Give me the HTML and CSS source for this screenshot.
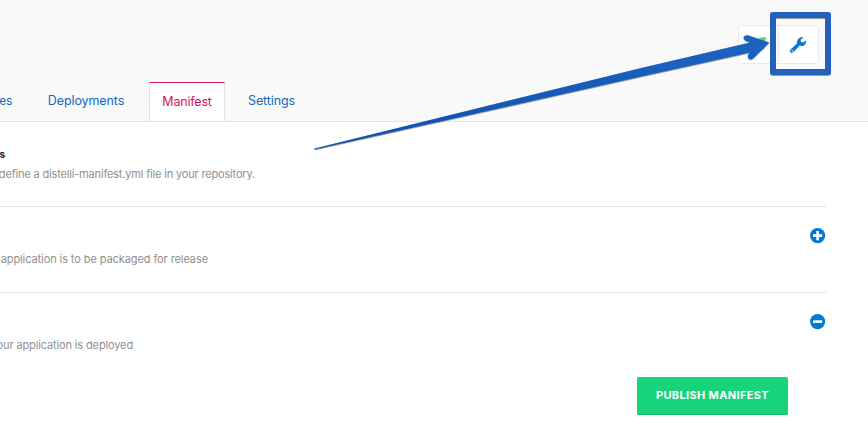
FILE: index.html
```html
<!DOCTYPE html>
<html lang="en">
<head>
<meta charset="utf-8">
<title>Manifest</title>
<link rel="stylesheet" href="styles.css">
</head>
<body>
<header class="header">
  <div class="actions">
    <button class="action" aria-label="Deploy"><svg width="16" height="16" viewBox="0 0 16 16"><path d="M0 7 7 1.5Q10 0 15 0L13 13 8 10Z" fill="#55db7c"/></svg></button>
    <button class="action" aria-label="Tools"><svg class="wrench" width="18" height="18" viewBox="0 0 18 18"><path fill="#0579d2" fill-rule="evenodd" d="M14.4 1.2 11.6 3.9 12.1 6.1 14.1 6.4 17 4.5C17.5 7.7 15.4 10.1 12.4 10.1 11.8 10.1 11.2 9.9 10.7 9.6L4.5 16.1C3.6 17.1 2.3 17.2 1.4 16.3.6 15.4.7 14.3 1.5 13.4L8.2 7.2C7.4 3.6 11 .1 14.4 1.2ZM3.1 14a.8.8 0 1 0 .1 1.6.8.8 0 0 0-.1-1.6Z"/></svg></button>
  </div>
  <nav class="tabs">
    <a class="tab tab-first">es</a>
    <a class="tab tab-deploy">Deployments</a>
    <a class="tab active">Manifest</a>
    <a class="tab tab-settings">Settings</a>
  </nav>
</header>
<main class="content">
  <section class="row intro">
    <div class="copy w-intro"><h2>s</h2><p>define a distelli-manifest.yml file in your repository.</p></div>
  </section>
  <section class="row">
    <div class="copy w-package"><p>application is to be packaged for release</p></div>
    <svg class="toggle" width="16" height="16" viewBox="0 0 16 16"><circle cx="7.6" cy="7.6" r="7.6" fill="#0579d2"/><path d="M3 7.6h9.2M7.6 3v9.2" stroke="#fff" stroke-width="2.6"/></svg>
  </section>
  <section class="row last">
    <div class="copy w-deploy"><p>our application is deployed</p></div>
    <svg class="toggle" width="16" height="16" viewBox="0 0 16 16"><circle cx="7.6" cy="7.6" r="7.6" fill="#0579d2"/><path d="M3 7.6h9.2" stroke="#fff" stroke-width="2.6"/></svg>
  </section>
  <button class="publish">PUBLISH MANIFEST</button>
</main>
<svg class="annotation" width="868" height="447" viewBox="0 0 868 447">
  <defs>
    <linearGradient id="ink" x1="0" y1="0" x2=".15" y2="1"><stop offset="0" stop-color="#2368c5"/><stop offset="1" stop-color="#0b50b0"/></linearGradient>
    <filter id="shade" x="-5%" y="-10%" width="110%" height="120%"><feDropShadow dx="0" dy=".7" stdDeviation=".4" flood-color="#222" flood-opacity=".6"/></filter>
  </defs>
  <rect x="773" y="15" width="55" height="57" fill="none" stroke="#2162be" stroke-width="6" stroke-linejoin="round" filter="url(#shade)"/>
  <path filter="url(#shade)" fill="url(#ink)" d="M314.5 148.4 640 68.2 750 42.4 745.5 40.6Q743 39 743.7 37 744.8 34.6 748 35.3L769.3 42.4 753.8 57.8Q751 60.5 748.6 58.6 747 56.9 748.5 54L750 52.6 640 76.8 314.5 149.6Z"/>
</svg>
</body>
</html>
```
FILE: styles.css
```css
* { box-sizing: border-box; }
body {
  margin: 0;
  height: 447px;
  overflow: hidden;
  position: relative;
  background: #fff;
  font-family: Inter, "Liberation Sans", sans-serif;
}
button { font: inherit; margin: 0; padding: 0; }
.header {
  height: 122px;
  padding-top: 25px;
  background: #f9f9f9;
  border-bottom: 1px solid #e1e1e1;
}
.actions {
  display: flex;
  width: 81px;
  height: 39px;
  margin-left: 738px;
  border: 1px solid #e9e9e9;
  border-radius: 4px;
  background: #fff;
  overflow: hidden;
}
.action {
  flex: 1;
  display: flex;
  align-items: center;
  justify-content: center;
  border: 0;
  background: #fff;
}
.action + .action { border-left: 1px solid #e9e9e9; }
.wrench { margin-right: 2px; }
.tabs {
  display: flex;
  height: 39px;
  margin-top: 18px;
}
.tab {
  display: flex;
  align-items: center;
  justify-content: center;
  flex: none;
  padding-bottom: 2px;
  font-size: 12.5px;
  color: #1269bf;
  white-space: nowrap;
}
.tab-first { width: 12px; justify-content: flex-end; margin-right: 24px; font-size: 12px; letter-spacing: -.3px; }
.tab-deploy { width: 100px; margin-right: 13px; letter-spacing: -.1px; }
.tab-settings { width: 93px; letter-spacing: -.1px; }
.active {
  width: 76px;
  padding-bottom: 1px;
  letter-spacing: -.2px;
  color: #d81458;
  background: #fff;
  border: 1px solid #e1e1e1;
  border-top-color: #dc1559;
  border-bottom: 0;
}
.content {
  width: 826px;
  display: flex;
  flex-direction: column;
}
.row {
  display: flex;
  justify-content: space-between;
  height: 86px;
  padding-top: 21px;
  border-bottom: 1px solid #e4e4e4;
}
.intro { height: 85px; padding-top: 24px; }
.last { height: 84px; border-bottom: 0; }
.copy {
  display: flex;
  flex-direction: column;
  align-items: flex-end;
  padding-top: 23px;
  white-space: nowrap;
}
.intro .copy { padding-top: 0; }
.w-intro { width: 255px; }
.w-intro p { letter-spacing: -.17px; }
.w-package { width: 208px; }
.w-deploy { width: 133px; }
.w-deploy p { letter-spacing: -.13px; }
h2 {
  width: 5px;
  display: flex;
  justify-content: flex-end;
  align-self: flex-start;
  margin: 0 0 4px;
  font-size: 10px;
  line-height: 16px;
  color: #141c35;
}
p {
  margin: 0;
  font-size: 11px;
  line-height: 16px;
  letter-spacing: -.09px;
  color: #918f8f;
}
.publish {
  align-self: flex-end;
  width: 151px;
  height: 38px;
  margin-right: 38px;
  padding-bottom: 2px;
  border: 0;
  border-bottom: 1px solid #12bd68;
  border-radius: 2px;
  background: #17d37a;
  color: #fff;
  font-size: 11px;
  font-weight: 700;
  letter-spacing: .35px;
}
.annotation { position: absolute; left: 0; top: 0; pointer-events: none; }
```
